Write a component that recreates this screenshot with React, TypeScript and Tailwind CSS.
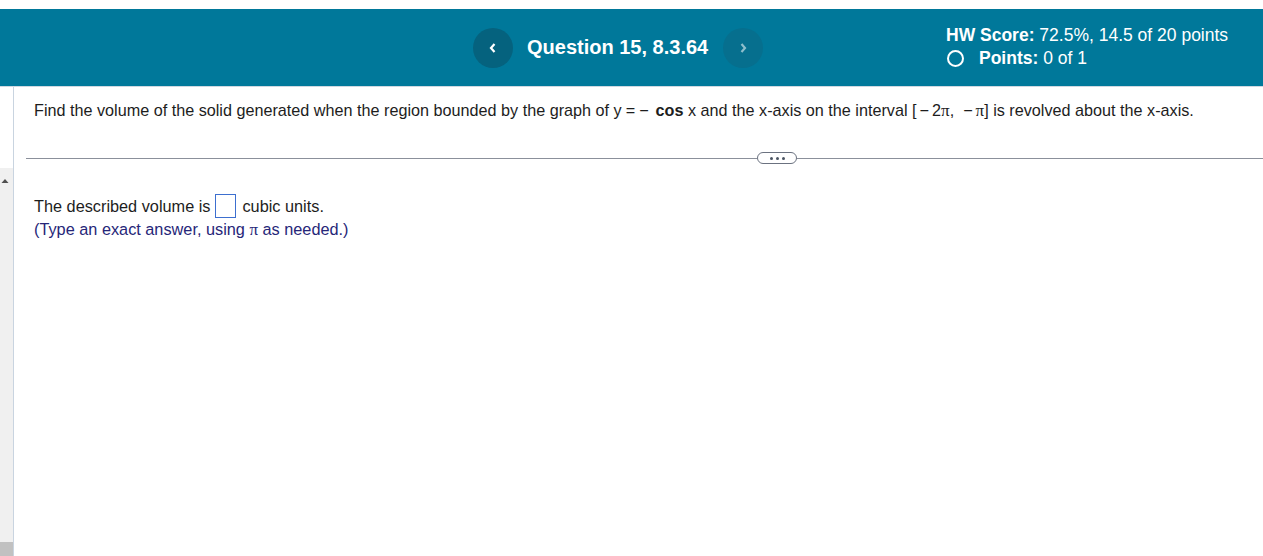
import React from "react";

const PI = () => <span style={{ fontFamily: '"Liberation Serif", serif' }} className="text-[17px]">π</span>;

export default function App() {
  return (
    <div className="h-[556px] w-full overflow-hidden bg-white flex flex-col text-[#1d1d1d]" style={{ fontFamily: '"Liberation Sans", Arial, sans-serif' }}>
      <div className="h-[9px] shrink-0 bg-white" />
      <header className="h-[78px] shrink-0 bg-[#00789a] flex items-center text-white border-b border-[#cfd8e1]">
        <div className="w-[473px] shrink-0" />
        <button className="w-10 h-10 rounded-full bg-[#05627e] flex items-center justify-center shrink-0">
          <svg width="10" height="12" viewBox="0 0 10 12"><path d="M6.5 2 L3 6 L6.5 10" stroke="white" strokeWidth="2.2" fill="none" /></svg>
        </button>
        <div className="ml-[14px] w-[182px] text-[20px] font-bold leading-none pb-[1px] whitespace-nowrap">Question 15, 8.3.64</div>
        <button className="ml-[14px] w-10 h-10 rounded-full bg-[#066f8e] flex items-center justify-center shrink-0">
          <svg width="10" height="12" viewBox="0 0 10 12"><path d="M3.5 2 L7 6 L3.5 10" stroke="rgba(255,255,255,0.55)" strokeWidth="2.2" fill="none" /></svg>
        </button>
        <div className="ml-[183px] flex flex-col text-[17.5px] leading-[23px] pb-[2px] whitespace-nowrap">
          <div><span className="font-bold">HW Score:</span> 72.5%, 14.5 of 20 points</div>
          <div className="flex items-center">
            <span className="ml-[1px] w-[17px] h-[17px] rounded-full border-2 border-white inline-block" />
            <span className="ml-[15px] font-bold">Points:</span>&nbsp;0 of 1
          </div>
        </div>
      </header>
      <div className="flex flex-1 min-h-0">
        <div className="w-[14px] shrink-0 flex flex-col border-r border-[#c9d4e0]">
          <div className="h-[81px] shrink-0" />
          <div className="flex-1 bg-[#f0f0f0] flex flex-col justify-between">
            <svg width="14" height="24" viewBox="0 0 14 24"><path d="M1.5 15 L5 11 L8.5 15 Z" fill="#505050" /></svg>
            <div className="h-[14px] w-[13px] bg-[#c1c1c1]" />
          </div>
        </div>
        <main className="flex-1 pl-[12px]">
          <div className="pl-[8px] pt-[13px] text-[16.2px] leading-[20px] whitespace-nowrap">
            Find the volume of the solid generated when the region bounded by the graph of y<span className="mx-[4px]">=</span>
            <span className="mr-[7px]">−</span><span className="font-bold">cos</span> x and the x-axis on the interval [<span className="mx-[3px]">−</span>2<PI />,&nbsp;&nbsp;<span className="mr-[3px]">−</span><PI />] is revolved about the x-axis.
          </div>
          <div className="mt-[31px] flex items-center">
            <div className="w-[731px] h-[1px] bg-[#8b909b]" />
            <div className="w-[40px] h-[12px] rounded-full border border-[#6b7280] bg-white flex items-center justify-center gap-[3px]">
              <span className="w-[3px] h-[3px] rounded-full bg-[#4b5563]" />
              <span className="w-[3px] h-[3px] rounded-full bg-[#4b5563]" />
              <span className="w-[3px] h-[3px] rounded-full bg-[#4b5563]" />
            </div>
            <div className="flex-1 h-[1px] bg-[#8b909b]" />
          </div>
          <div className="pl-[8px] mt-[30px] text-[16.3px]">
            <div className="flex items-center h-[24px]">
              The described volume is
              <span className="inline-block ml-[5px] mr-[6px] w-[21px] h-[24px] border border-[#3d6fcf] bg-white" />
              cubic units.
            </div>
            <div className="text-[#262678] leading-[23px]">(Type an exact answer, using <PI /> as needed.)</div>
          </div>
        </main>
      </div>
    </div>
  );
}
